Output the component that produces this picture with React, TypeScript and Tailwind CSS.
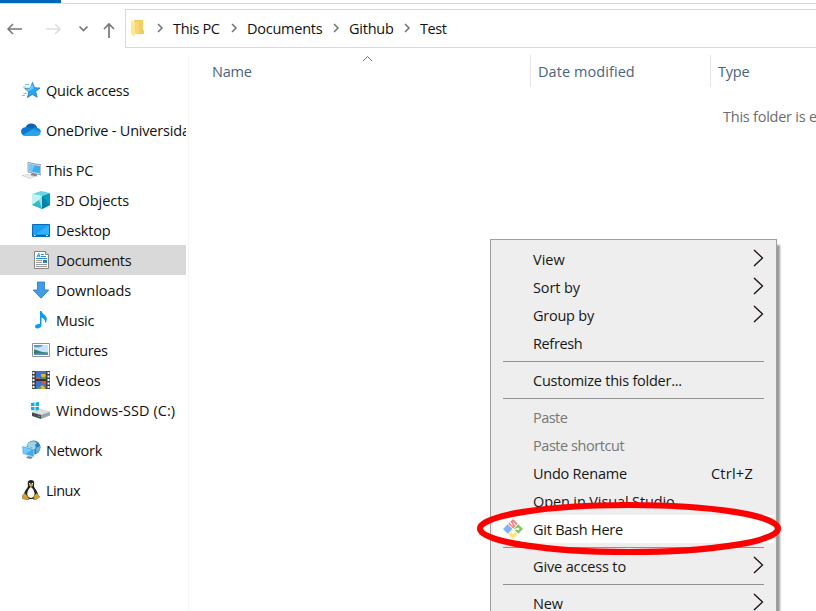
import React from "react";

type IconName = "star" | "cloud" | "pc" | "cube" | "desktop" | "doc" | "down" | "music" | "picture" | "video" | "drive" | "network" | "linux";

function Icon({ name }: { name: IconName }) {
  const art: Record<IconName, React.ReactNode> = {
    star: (
      <>
        <path d="M11.500 2.500l2 5.200 5.500.3-4.300 3.500 1.500 5.700-4.900-2.800-4.800 3.200 1.400-5.600-4.200-3.500 5.700-.4z" fill="#29a4ee" stroke="#167ac0" strokeWidth=".8" />
        <path d="M11.500 4l1.200 4.200-5 3.200-3.200-2.700 4-.3z" fill="#67c8fa" />
        <path d="M4 4.500h4M2 7h3M2.500 13.500h3M1 15.500h3" stroke="#5bb4e8" strokeWidth=".8" />
      </>
    ),
    cloud: (
      <>
        <path d="M4.500 8C5 4.600 8 3 11 3.500c3 .3 4.500 2 5.200 4.300L11 12z" fill="#0a63b8" />
        <path d="M4.500 7.200c2.500-.6 4.500.3 7 1.800L5 16C2 16 0 14 0 11.500c0-2.500 2-4.200 4.500-4.300z" fill="#0f78d0" />
        <path d="M10.500 9.200c1.500-1.400 3.500-1.800 5.500-1.500 2.500.3 4 2 4 4.300L12 13z" fill="#148ddd" />
        <path d="M2 15.100l9.500-5.800 8.300 3.200c-.3 2-1.800 3.500-4 3.500H5c-1.200 0-2.200-.3-3-.9z" fill="#28a5ea" />
      </>
    ),
    pc: (
      <>
        <path d="M7 2.500l13 2.500v10L7 12z" fill="#e4edf3" stroke="#748594" strokeWidth=".8" />
        <path d="M8 4l11 2v7.500L8 11z" fill="#3eaaf1" />
        <path d="M8 4l6 1-3 6.500-3-.5z" fill="#70c8fa" />
        <path d="M11 13l5 1.500v2l-7-1.300z" fill="#7c8a96" />
        <path d="M1 15.500l5-1 8 2-5 2z" fill="#e0e3e6" stroke="#b7bcc2" strokeWidth=".5" />
        <path d="M3 15.500l8 2M5 15l7 2" stroke="#f7f7f7" strokeWidth=".6" />
      </>
    ),
    cube: (
      <>
        <path d="M1 4l9-3 9 2-8 3z" fill="#67d5e2" />
        <path d="M1 4l10 2v13L1 15z" fill="#8ce3e7" />
        <path d="M11 6l8-3v12l-8 4z" fill="#069cbd" />
        <path d="M1 4l10 2-4 5-6 4z" fill="#c1f4ef" />
        <path d="M1 15l7-5 3 9z" fill="#36b8cc" />
        <path d="M11 6l8 9-8 4z" fill="#0683a7" />
      </>
    ),
    desktop: (
      <>
        <path d="M1.500 4.500h17v12h-17z" fill="#1b9df4" stroke="#096bb6" />
        <path d="M18 5v9L5 14z" fill="#35b1ff" />
        <path d="M2 15.500h16" stroke="#075caa" />
        <path d="M3 15.500h1.500M15 15.500h2" stroke="#fff" />
      </>
    ),
    doc: (
      <>
        <path d="M3.500 1.500h11l3 3v14h-14z" fill="#fff" stroke="#858585" />
        <path d="M14.500 1.500v3h3" fill="#eee" stroke="#858585" />
        <path d="M6 7l1.700-3.500L9 7M6.500 6H9" fill="none" stroke="#278ccc" />
        <path d="M10 4.500h3M10 6.500h5M5 8.500h11" stroke="#2893d3" />
        <path d="M5 10.500h6M5 12.500h6M5 14.500h11M5 16.500h11" stroke="#999" />
        <path d="M12 10h4v3h-4z" fill="#397bac" />
      </>
    ),
    down: <path d="M6.500 2h7v8h4.300L10 18.200 2.200 10h4.300z" fill="#439be9" stroke="#2579c4" strokeWidth=".8" />,
    music: <path d="M9 1h1.500c.5 3.200 5.300 4 5.300 8 0 1.500-.6 3-1.800 4 .5-3-1-4.300-3.500-5.500V15c0 2-2.200 3.500-4.200 3.500C4.800 18.500 4 17.500 4 16.500 4 14.700 6.200 13.500 9 14z" fill="#0a9cf5" />,
    picture: (
      <>
        <path d="M1.500 3.500h17v13h-17z" fill="#fff" stroke="#939393" />
        <path d="M3 5h14v10H3z" fill="#c9e4f6" />
        <path d="M3 5h9c-1 2-5 3-9 2z" fill="#5599cd" />
        <path d="M3 9.500c4 0 5 3 14 3V15H3z" fill="#367c74" />
        <path d="M3 14c5-2 9 0 14-1v2H3z" fill="#5a8db5" />
      </>
    ),
    video: (
      <>
        <path d="M1 1h18v18H1z" fill="#424242" />
        <path d="M2.500 2v17M17.500 2v17" stroke="#f4f4f4" strokeWidth="2" strokeDasharray="2 1.500" />
        <path d="M5 1h10v8H5zM5 11h10v8H5z" fill="#3975c8" />
        <path d="M6 7h3v2H5zM10 11h5v2l-3 2z" fill="#df553c" />
        <path d="M10 4h4l1 2-3 2-2-2zM9 17l2-2 3 2v2h-4z" fill="#e8b529" />
        <path d="M11 7l4 1v1h-5zM7 17h3v2H6z" fill="#539c48" />
        <path d="M4.500 10h11" stroke="#222" />
      </>
    ),
    drive: (
      <>
        <path d="M0 3l3.500-.4V6H0zm4.500-.5L8 2v4H4.500zM0 7h3.500v3.500L0 10zm4.500 0H8v4l-3.500-.4z" fill="#09b1e5" />
        <path d="M1 12.500l8-3 10 2.500-9 3z" fill="#dfe1e2" stroke="#b7babc" strokeWidth=".5" />
        <path d="M1 12.500l9 2.500v4l-9-3z" fill="#444a4e" />
        <path d="M10 15l9-3v3.500L10 19z" fill="#9da2a5" />
        <path d="M7 16l1.500.5" stroke="#48e070" />
      </>
    ),
    network: (
      <>
        <circle cx="12.500" cy="7.500" r="7" fill="#2781b7" />
        <path d="M6 5c2-4 7-5 10-2l-2 2 1 3-3 2-2-3-2 2z" fill="#9cd5e8" />
        <path d="M15 8l4-2v4l-4 4z" fill="#69b3d6" />
        <path d="M1 6l12 3v8L2 14z" fill="#3dadf0" stroke="#c4e4f6" strokeWidth=".7" />
        <path d="M2 7l9 3-7 4-1-.5z" fill="#79cafa" />
        <path d="M7 16l5 1-2 2-5-1z" fill="#788c99" />
      </>
    ),
    linux: (
      <>
        <path d="M10 0C6.500 0 6.500 3 7 5.500c0 3-4.500 5-4 11l3 2.500h8l3-2.500c.6-6-4.500-8-4-11C13.500 3 13.500 0 10 0z" fill="#202225" />
        <path d="M9.800 7c-1.500 1-3 3-3.500 6-.5 2 1 5 3.700 5s4-3 3.500-5c-.4-3-2-5-3.700-6z" fill="#f9f9f7" />
        <path d="M8 3h1.300v1.500H8zM10.700 3H12v1.500h-1.300z" fill="#fff" />
        <path d="M8 5l2-1 2.500 1L10 7z" fill="#e3ac31" />
        <path d="M3.500 13l3 3 1.500 3-1 1-5.500-1.500v-3zM16 13l-3 2.500-.5 4 1.500.5 4.800-3-2-2.500z" fill="#d8a12b" stroke="#74531a" strokeWidth=".5" />
      </>
    ),
  };
  return <svg className="size-5 shrink-0" viewBox="0 0 20 20">{art[name]}</svg>;
}

const places: { icon: IconName; label: string; row: string; text: string }[] = [
  { icon: "star", label: "Quick access", row: "mb-2.5 pl-[21px]", text: "" },
  { icon: "cloud", label: "OneDrive - Universidad", row: "mb-2.5 pl-[21px]", text: "tracking-[-0.2px]" },
  { icon: "pc", label: "This PC", row: "pl-[21px]", text: "tracking-[-0.3px]" },
  { icon: "cube", label: "3D Objects", row: "pl-[31px]", text: "tracking-[-0.04px]" },
  { icon: "desktop", label: "Desktop", row: "pl-[31px]", text: "" },
  { icon: "doc", label: "Documents", row: "bg-[#d9d9d9] pl-[31px]", text: "" },
  { icon: "down", label: "Downloads", row: "pl-[31px]", text: "tracking-[-0.06px]" },
  { icon: "music", label: "Music", row: "pl-[31px]", text: "" },
  { icon: "picture", label: "Pictures", row: "pl-[31px]", text: "tracking-[-0.34px]" },
  { icon: "video", label: "Videos", row: "pl-[31px]", text: "tracking-[-0.04px]" },
  { icon: "drive", label: "Windows-SSD (C:)", row: "mb-2.5 pl-[31px]", text: "tracking-[0.07px]" },
  { icon: "network", label: "Network", row: "mb-2.5 pl-[21px]", text: "" },
  { icon: "linux", label: "Linux", row: "pl-[21px]", text: "tracking-[-0.5px]" },
];

function Crumb({ label, className }: { label: string; className: string }) {
  return (
    <div className={`flex shrink-0 items-center ${className}`}>
      <svg className="mr-[9px] -mt-0.5 h-[10px] w-[7px] shrink-0" viewBox="0 0 7 10"><path d="M1 1l4 4-4 4" fill="none" stroke="#777" strokeWidth="1.600" /></svg>
      <span>{label}</span>
    </div>
  );
}

function GitIcon() {
  return (
    <svg className="absolute left-[10px] top-1 size-5" viewBox="0 0 20 20">
      <path d="M10 0l4.700 4.700L10 9.400 5.300 4.700z" fill="#fa8080" />
      <path d="M4.700 5.300L9.400 10l-4.700 4.700L0 10z" fill="#80b3ff" />
      <path d="M15.300 5.300L20 10l-4.700 4.700-4.700-4.700z" fill="#80c95d" />
      <path d="M10 10.600l4.700 4.700L10 20l-4.700-4.700z" fill="#ffe682" />
      <path d="M6.500 2.500l3 4M10.500 3.500l2 3M10 11v3M11 11l3-1.500" fill="none" stroke="#fff" strokeWidth="1.100" />
      <circle cx="10" cy="13.500" r="1.500" fill="#fff" /><circle cx="15" cy="10" r="1.300" fill="#fff" />
    </svg>
  );
}

function MenuItem({ label, arrow, disabled, shortcut, active, text = "" }: { label: string; arrow?: boolean; disabled?: boolean; shortcut?: string; active?: boolean; text?: string }) {
  return (
    <div className={`relative mx-0.5 flex h-7 items-center pr-[10px] pl-10 ${active ? "bg-white" : ""} ${disabled ? "text-[#777]" : "text-[#171717]"}`}>
      {active && <GitIcon />}
      <span className={`pt-0.5 ${text}`}>{label}</span>
      {shortcut && <span className="mr-[11px] ml-auto pt-0.5 tracking-[0.27px]">{shortcut}</span>}
      {arrow && (
        <svg className="-mt-0.5 ml-auto h-[18px] w-[11px]" viewBox="0 0 11 18" fill="none">
          <path d="M.5 1L9 9 .5 17" stroke="#e9a34f" strokeWidth=".8" />
          <path d="M1.700 1l8.500 8-8.500 8" stroke="#4a9cdd" strokeWidth=".8" />
          <path d="M1 1l8.500 8L1 17" stroke="#260d13" strokeWidth="1.100" />
        </svg>
      )}
    </div>
  );
}

const Separator = () => <div className="mr-3 ml-3 h-[9px] pt-1"><div className="h-px bg-[#919191]" /></div>;

export default function App() {
  return (
    <div className="relative flex h-[611px] w-[816px] flex-col overflow-hidden bg-white font-['Open_Sans','Noto_Sans',sans-serif] text-[14.5px] leading-5 tracking-[-0.24px] whitespace-nowrap text-[#111]">
      <div className="h-1 shrink-0 border-b border-[#d9d9d9]"><div className="h-[3px] w-[61px] bg-[#0067b8]" /></div>
      <nav className="mt-[5px] flex h-[39px] shrink-0 items-center">
        <svg className="h-[39px] w-[125px] shrink-0" viewBox="0 9 125 39" fill="none" stroke="#777" strokeWidth="1.500">
          <path d="M8 29h14M13 24l-5 5 5 5" />
          <path d="M46 29h14M55 24l5 5-5 5" stroke="#ddd" />
          <path d="M79.500 26.500l4 4 4-4" strokeWidth="1.700" />
          <path d="M109 38V24M104 29l5-5 5 5" strokeWidth="1.700" />
        </svg>
        <div className="flex h-[39px] flex-1 items-center overflow-hidden border border-r-0 border-[#d9d9d9]">
          <svg className="-mt-0.5 ml-[5px] h-[18px] w-[13px] shrink-0" viewBox="0 0 13 18"><path d="M3 1h9v10h1v4H3z" fill="#f3cd62" /><path d="M0 1l4 2v15l-4-3z" fill="#ffe795" /><path d="M4 3h4v12H4z" fill="#f7d777" /></svg>
          <Crumb label="This PC" className="ml-[13px] w-[74px] tracking-[-0.36px]" />
          <Crumb label="Documents" className="w-[102px]" />
          <Crumb label="Github" className="w-[71px]" />
          <Crumb label="Test" className="tracking-[-0.4px]" />
        </div>
      </nav>
      <div className="flex min-h-0 flex-1 pt-[7px]">
        <aside className="w-[189px] shrink-0 border-r border-[#f5f5f5] pt-5 pr-0.5">
          {places.map((p) => (
            <div key={p.label} className={`flex h-[30px] items-center overflow-hidden ${p.row}`}>
              <Icon name={p.icon} /><span className={`ml-[5px] pt-0.5 ${p.text}`}>{p.label}</span>
            </div>
          ))}
        </aside>
        <main className="min-w-0 flex-1">
          <header className="flex h-8 text-[#4b6380]">
            <div className="relative flex w-[341px] shrink-0 items-center pt-0.5 pl-[23px]">
              Name
              <svg className="absolute top-0 left-[173px] h-[7px] w-[11px]" viewBox="0 0 11 7"><path d="M1 6l4.500-4.500L10 6" fill="none" stroke="#777" /></svg>
            </div>
            <div className="flex w-[180px] shrink-0 items-center border-l border-[#e5e5e5] pt-0.5 pl-[7px] tracking-[0.07px]">Date modified</div>
            <div className="flex items-center border-l border-[#e5e5e5] pt-0.5 pl-[7px]">Type</div>
          </header>
          <p className="mt-5 ml-[534px] text-[#6d6d6d]">This folder is empty.</p>
        </main>
      </div>
      <div className="absolute top-[239px] left-[490px] h-[390px] w-[287px] border border-[#a0a0a0] bg-[#eee] pt-[5px] shadow-[4px_5px_2px_-1px_#999]">
        <MenuItem label="View" arrow text="tracking-[0px]" />
        <MenuItem label="Sort by" arrow text="tracking-[-0.1px]" />
        <MenuItem label="Group by" arrow />
        <MenuItem label="Refresh" text="tracking-[-0.36px]" />
        <Separator />
        <MenuItem label="Customize this folder..." />
        <Separator />
        <MenuItem label="Paste" disabled text="tracking-[-0.54px]" />
        <MenuItem label="Paste shortcut" disabled text="tracking-[-0.45px]" />
        <MenuItem label="Undo Rename" shortcut="Ctrl+Z" />
        <MenuItem label="Open in Visual Studio" text="tracking-[-0.12px]" />
        <MenuItem label="Git Bash Here" active />
        <Separator />
        <MenuItem label="Give access to" arrow text="tracking-[-0.14px]" />
        <Separator />
        <MenuItem label="New" arrow text="tracking-[-0.1px]" />
      </div>
      <svg className="pointer-events-none absolute top-[500px] left-[475px] h-[58px] w-[308px]" viewBox="0 0 308 58"><ellipse cx="154" cy="28.500" rx="149" ry="23.500" fill="none" stroke="#f00" strokeWidth="6.200" /></svg>
    </div>
  );
}
